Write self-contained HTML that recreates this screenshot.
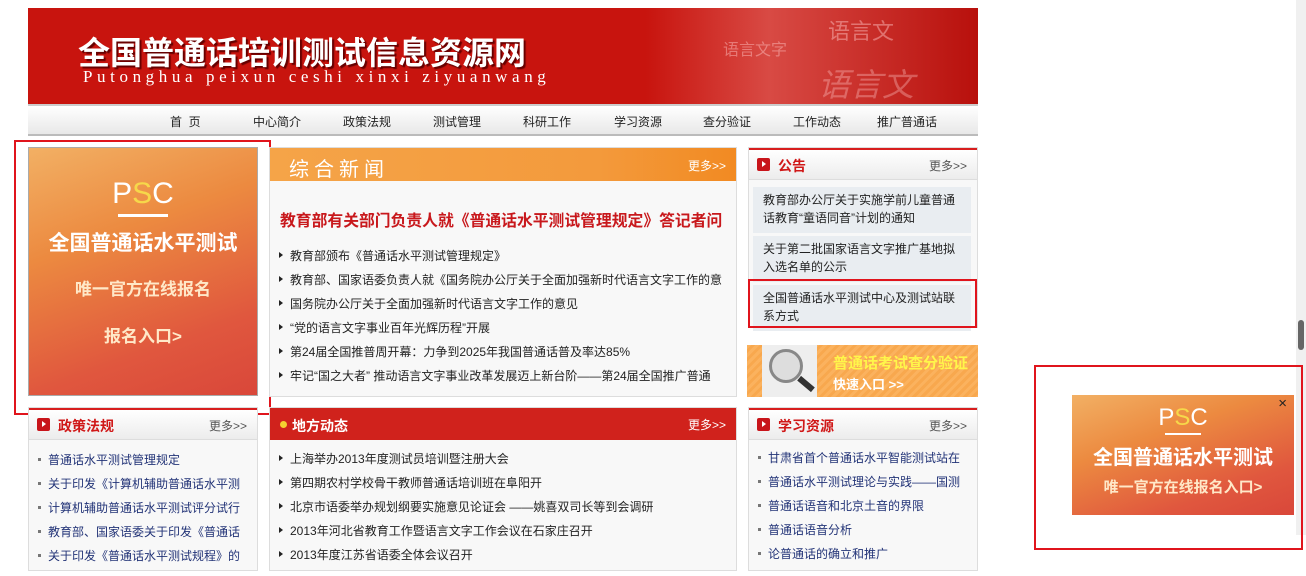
<!DOCTYPE html>
<html><head><meta charset="utf-8"><style>
*{margin:0;padding:0;box-sizing:border-box}
body{width:1306px;height:576px;overflow:hidden;background:#fff;font-family:"Liberation Sans","Noto Sans CJK SC",sans-serif;font-size:12px;color:#222;position:relative}
.a{position:absolute}
.hdr{left:28px;top:8px;width:950px;height:96px;background:linear-gradient(90deg,#c8140e 0%,#c8140e 65%,#d84a44 78%,#b8100c 100%);overflow:hidden}
.nav{left:28px;top:104px;width:950px;height:32px;background:linear-gradient(#fff,#e8e8e8);border-top:2px solid #ccc;border-bottom:2px solid #bbb}
.nav span{position:absolute;top:7px;font-size:12px;color:#222}
.ad{background:linear-gradient(160deg,#f2b064 0%,#ec8a40 35%,#e0573e 75%,#d9473a 100%);color:#fff;text-align:center}
.box{border:1px solid #ddd;background:#f8f8f8}
.bh{position:absolute;left:0;right:0;top:0;height:32px;border-top:2px solid #d81e1e;background:linear-gradient(#fff,#ececec);border-bottom:1px solid #ddd}
.ic{position:absolute;left:8px;top:8px;width:13px;height:13px;background:#c8141a;border-radius:2px}
.ic:after{content:"";position:absolute;left:5px;top:3px;border-left:4px solid #fff;border-top:3.5px solid transparent;border-bottom:3.5px solid transparent}
.bt{position:absolute;left:29px;top:6px;font-size:14px;font-weight:bold;color:#d01818}
.more{position:absolute;right:10px;top:7px;font-size:12px;color:#555}
.li{position:absolute;font-size:12px;white-space:nowrap;overflow:hidden}
.tri:before{content:"";display:inline-block;border-left:4px solid #222;border-top:3px solid transparent;border-bottom:3px solid transparent;margin-right:7px;vertical-align:2px}
.sq:before{content:"";display:inline-block;width:3px;height:3px;background:#777;margin-right:7px;vertical-align:3px}
.blue{color:#223377}
.rb{border:2px solid #e0141c}
.nt{position:absolute;left:4px;width:218px;height:46px;background:#e9edf1;padding:4px 10px;font-size:12px;line-height:18px}
</style></head><body>
<div class="a" style="right:0;top:0;width:10px;height:535px;background:#f0f0f0"></div>
<div class="a" style="right:2px;top:320px;width:6px;height:30px;background:#666;border-radius:3px"></div>
<div class="a hdr">
 <div class="a" style="left:50px;top:20px;font-size:32px;font-weight:bold;color:#fff;text-shadow:2px 2px 1px #600;letter-spacing:0px;white-space:nowrap">全国普通话培训测试信息资源网</div>
 <div class="a" style="left:55px;top:59px;font-family:'Liberation Serif',serif;font-size:17px;color:#fff;letter-spacing:4.6px;white-space:nowrap">Putonghua peixun ceshi xinxi ziyuanwang</div>
 <div class="a" style="left:695px;top:28px;font-size:16px;color:rgba(255,200,200,.45)">语言文字</div>
 <div class="a" style="left:800px;top:6px;font-size:22px;color:rgba(255,200,200,.45)">语言文</div>
 <div class="a" style="left:790px;top:52px;font-size:32px;color:rgba(255,200,200,.35);font-style:italic">语言文</div>
</div>
<div class="a nav">
 <span style="left:142px">首&nbsp; 页</span><span style="left:225px">中心简介</span><span style="left:315px">政策法规</span><span style="left:405px">测试管理</span><span style="left:495px">科研工作</span><span style="left:586px">学习资源</span><span style="left:675px">查分验证</span><span style="left:765px">工作动态</span><span style="left:849px">推广普通话</span>
</div>

<div class="a ad" style="left:28px;top:147px;width:230px;height:249px;border:1px solid #aaa">
 <div style="margin-top:30px;font-size:30px;line-height:32px">P<span style="color:#f6d84a">S</span>C</div>
 <div style="width:50px;height:3px;margin:4px auto 0;border-top:3px solid #fff"></div>
 <div style="margin-top:10px;font-size:21px;font-weight:bold">全国普通话水平测试</div>
 <div style="margin-top:18px;font-size:17px;font-weight:bold;color:#ffe8c8">唯一官方在线报名</div>
 <div style="margin-top:22px;font-size:17px;font-weight:bold;color:#ffe8c8">报名入口&gt;</div>
</div>
<div class="a rb" style="left:14px;top:140px;width:257px;height:275px"></div>

<div class="a box" style="left:269px;top:147px;width:468px;height:250px">
 <div class="a" style="left:0;top:0;right:0;height:33px;background:linear-gradient(90deg,#f5a448,#f39a3c 70%,#f28a22)"></div>
 <div class="a" style="left:19px;top:5px;font-size:20px;color:#fff;letter-spacing:5px">综合新闻</div>
 <div class="a" style="right:10px;top:9px;font-size:12px;color:#fff">更多&gt;&gt;</div>
 <div class="a" style="left:10px;top:60px;font-size:15.8px;font-weight:bold;color:#c8181c;white-space:nowrap">教育部有关部门负责人就《普通话水平测试管理规定》答记者问</div>
 <div class="li tri" style="left:9px;top:99px;width:450px">教育部颁布《普通话水平测试管理规定》</div>
 <div class="li tri" style="left:9px;top:123px;width:450px">教育部、国家语委负责人就《国务院办公厅关于全面加强新时代语言文字工作的意</div>
 <div class="li tri" style="left:9px;top:147px;width:450px">国务院办公厅关于全面加强新时代语言文字工作的意见</div>
 <div class="li tri" style="left:9px;top:171px;width:450px">“党的语言文字事业百年光辉历程”开展</div>
 <div class="li tri" style="left:9px;top:195px;width:450px">第24届全国推普周开幕：力争到2025年我国普通话普及率达85%</div>
 <div class="li tri" style="left:9px;top:219px;width:450px">牢记“国之大者” 推动语言文字事业改革发展迈上新台阶——第24届全国推广普通</div>
</div>

<div class="a box" style="left:748px;top:147px;width:230px;height:181px">
 <div class="bh"><div class="ic"></div><div class="bt">公告</div><div class="more">更多&gt;&gt;</div></div>
 <div class="nt" style="top:39px">教育部办公厅关于实施学前儿童普通话教育“童语同音”计划的通知</div>
 <div class="nt" style="top:88px">关于第二批国家语言文字推广基地拟入选名单的公示</div>
 <div class="nt" style="top:137px">全国普通话水平测试中心及测试站联系方式</div>
</div>
<div class="a rb" style="left:748px;top:279px;width:229px;height:49px"></div>
<div class="a" style="left:747px;top:345px;width:231px;height:52px;background:repeating-linear-gradient(135deg,#fbb25e 0 3px,#f8a84e 3px 6px)">
 <div class="a" style="left:15px;top:0;width:55px;height:52px;background:#eee"></div>
 <div class="a" style="left:22px;top:4px;width:34px;height:34px;border:3px solid #888;border-radius:50%;background:#ddd"></div>
 <div class="a" style="left:50px;top:36px;width:18px;height:6px;background:#333;transform:rotate(40deg)"></div>
 <div class="a" style="left:86px;top:7px;font-size:15px;font-weight:bold;color:#fff64a">普通话考试查分验证</div>
 <div class="a" style="left:86px;top:29px;font-size:13px;font-weight:bold;color:#fff">快速入口 &gt;&gt;</div>
</div>

<div class="a box" style="left:28px;top:407px;width:230px;height:164px">
 <div class="bh"><div class="ic"></div><div class="bt">政策法规</div><div class="more">更多&gt;&gt;</div></div>
 <div class="li sq blue" style="left:9px;top:43px;width:215px">普通话水平测试管理规定</div>
 <div class="li sq blue" style="left:9px;top:67px;width:215px">关于印发《计算机辅助普通话水平测</div>
 <div class="li sq blue" style="left:9px;top:91px;width:215px">计算机辅助普通话水平测试评分试行</div>
 <div class="li sq blue" style="left:9px;top:115px;width:215px">教育部、国家语委关于印发《普通话</div>
 <div class="li sq blue" style="left:9px;top:139px;width:215px">关于印发《普通话水平测试规程》的</div>
</div>
<div class="a box" style="left:269px;top:407px;width:468px;height:164px">
 <div class="a" style="left:0;top:0;right:0;height:32px;background:#d0221c"></div>
 <div class="a" style="left:10px;top:13px;width:7px;height:7px;border-radius:50%;background:#f5d030"></div>
 <div class="a" style="left:22px;top:8px;font-size:14px;font-weight:bold;color:#fff">地方动态</div>
 <div class="a" style="right:10px;top:8px;font-size:12px;color:#fff">更多&gt;&gt;</div>
 <div class="li tri" style="left:9px;top:42px">上海举办2013年度测试员培训暨注册大会</div>
 <div class="li tri" style="left:9px;top:66px">第四期农村学校骨干教师普通话培训班在阜阳开</div>
 <div class="li tri" style="left:9px;top:90px">北京市语委举办规划纲要实施意见论证会 ——姚喜双司长等到会调研</div>
 <div class="li tri" style="left:9px;top:114px">2013年河北省教育工作暨语言文字工作会议在石家庄召开</div>
 <div class="li tri" style="left:9px;top:138px">2013年度江苏省语委全体会议召开</div>
</div>
<div class="a box" style="left:748px;top:407px;width:230px;height:164px">
 <div class="bh"><div class="ic"></div><div class="bt">学习资源</div><div class="more">更多&gt;&gt;</div></div>
 <div class="li sq blue" style="left:9px;top:41px;width:215px">甘肃省首个普通话水平智能测试站在</div>
 <div class="li sq blue" style="left:9px;top:65px;width:215px">普通话水平测试理论与实践——国测</div>
 <div class="li sq blue" style="left:9px;top:89px;width:215px">普通话语音和北京土音的界限</div>
 <div class="li sq blue" style="left:9px;top:113px;width:215px">普通话语音分析</div>
 <div class="li sq blue" style="left:9px;top:137px;width:215px">论普通话的确立和推广</div>
</div>

<div class="a rb" style="left:1034px;top:365px;width:269px;height:185px"></div>
<div class="a ad" style="left:1072px;top:395px;width:222px;height:120px">
 <div class="a" style="right:7px;top:0;font-size:15px;color:#222">×</div>
 <div style="padding-top:10px;font-size:24px;line-height:26px">P<span style="color:#f6d84a">S</span>C</div>
 <div style="width:36px;margin:2px auto 0;border-top:2px solid #fff"></div>
 <div style="margin-top:6px;font-size:20px;font-weight:bold">全国普通话水平测试</div>
 <div style="margin-top:6px;font-size:15px;font-weight:bold;color:#ffe8c8">唯一官方在线报名入口&gt;</div>
</div>
</body></html>
